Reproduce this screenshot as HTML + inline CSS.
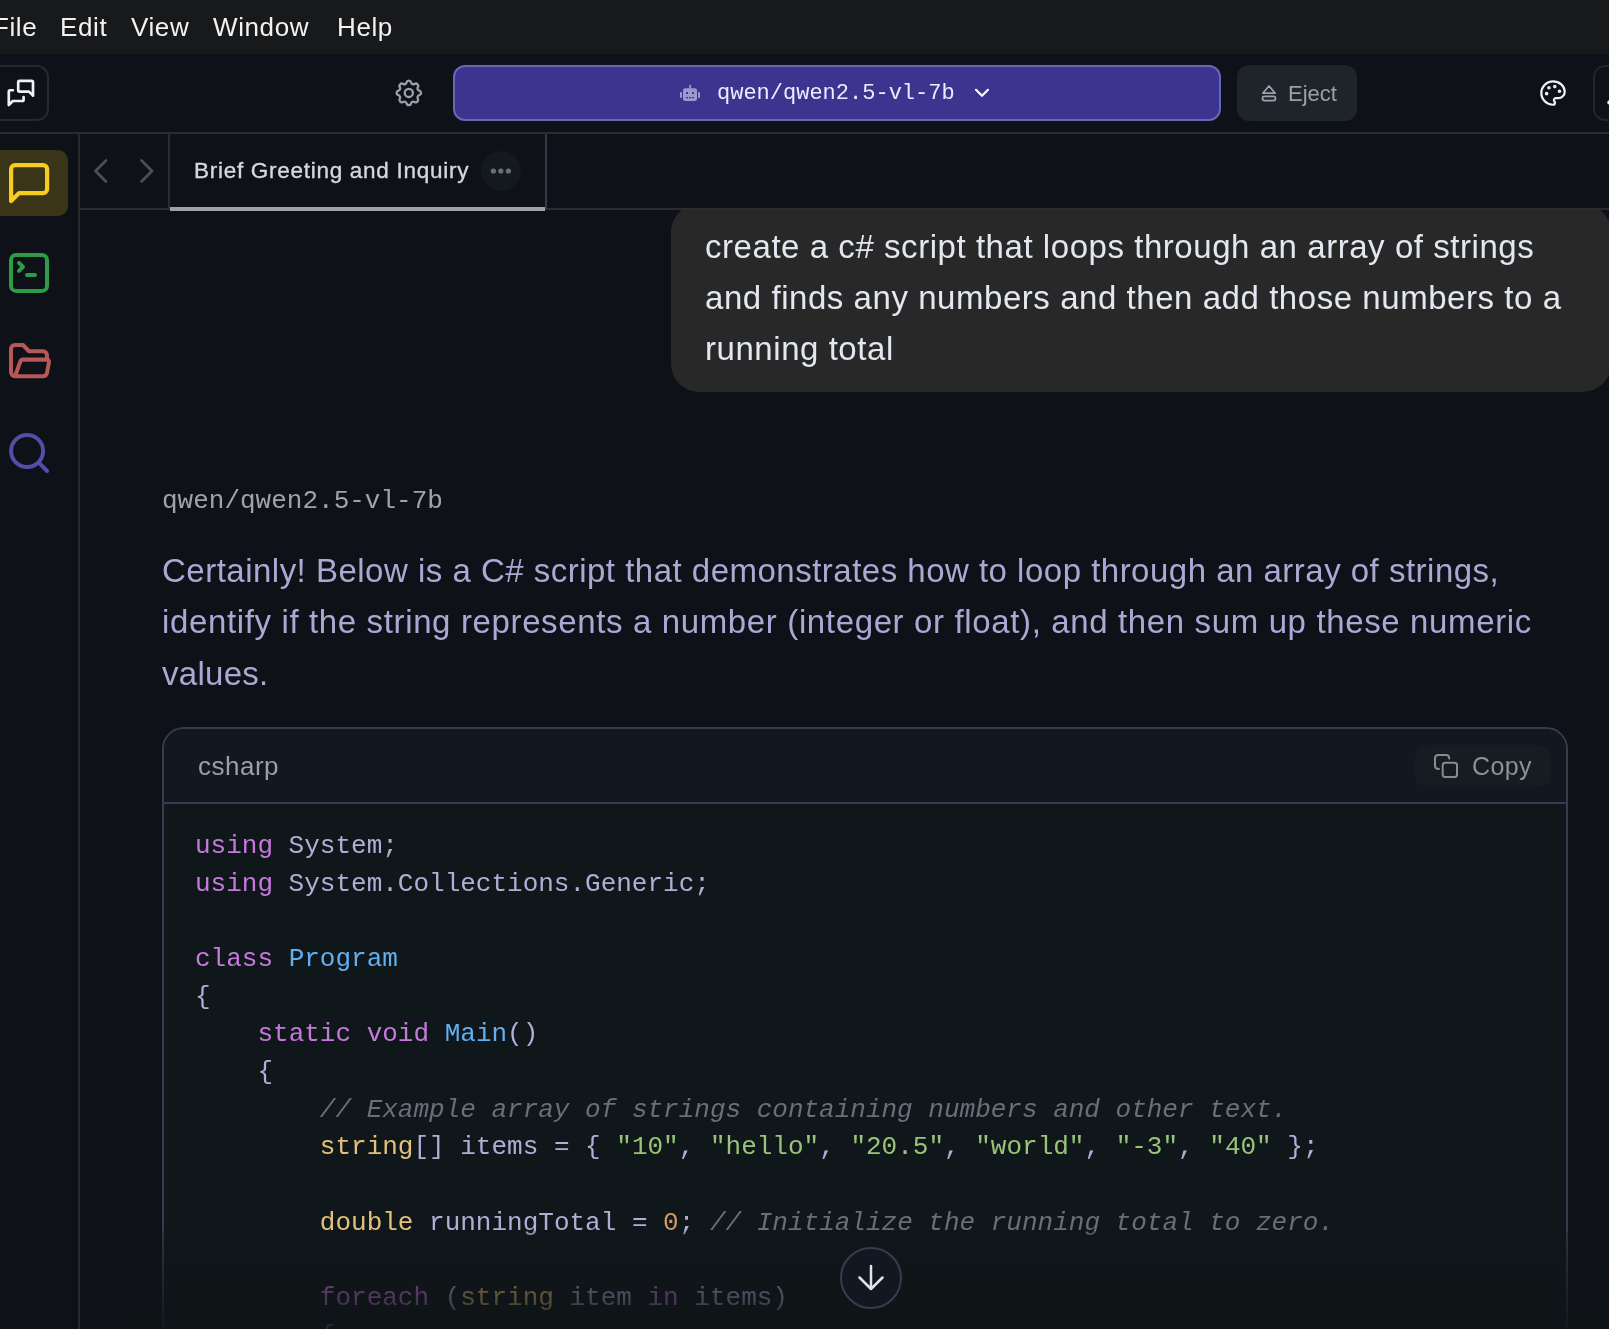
<!DOCTYPE html>
<html><head><meta charset="utf-8">
<style>
*{box-sizing:border-box;margin:0;padding:0}
html,body{width:1609px;height:1329px;overflow:hidden;background:#0e1117;font-family:"Liberation Sans",sans-serif}
.a{position:absolute}
.t{position:absolute;white-space:pre;line-height:1;will-change:transform}
pre{will-change:transform}
.mono{font-family:"Liberation Mono",monospace}
#menu{left:0;top:0;width:1609px;height:54px;background:#18191b}
#menu .t{color:#f2f2f2;font-size:26px;top:14px;letter-spacing:0.6px}
#hline1{left:0;top:132px;width:1609px;height:2px;background:#2a2c30}
#vline{left:78px;top:134px;width:2px;height:1195px;background:#28292d}
#tabline{left:80px;top:208px;width:1529px;height:2px;background:#2a2c30}
#sel{left:453px;top:65px;width:768px;height:56px;background:#3b3590;border:2px solid #6965bb;border-radius:12px}
#eject{left:1237px;top:65px;width:120px;height:56px;background:#1f232a;border-radius:12px}
#lbtn{left:-14px;top:65px;width:63px;height:56px;border:2px solid #252a31;border-radius:12px}
#rbtn{left:1593px;top:65px;width:63px;height:56px;border:2px solid #21262c;border-radius:12px}
#active{left:-10px;top:150px;width:78px;height:66px;background:#3a3418;border-radius:10px}
#tabsep1{left:168px;top:134px;width:2px;height:75px;background:#2a2c30}
#tabsep2{left:545px;top:134px;width:2px;height:75px;background:#363947}
#tabul{left:170px;top:207px;width:375px;height:4px;background:#9ca0a8}
#dots{left:481px;top:151px;width:40px;height:40px;border-radius:50%;background:#141920}
#bubclip{left:80px;top:210px;width:1529px;height:1119px;overflow:hidden}
#bubble{left:591px;top:-6px;width:940px;height:188px;background:#282828;border-radius:28px}
#bubble .t{color:#e3e8f0;font-size:33px;letter-spacing:0.55px}
#para .t{color:#aba9d4;font-size:33px;letter-spacing:0.57px}
#code{left:162px;top:727px;width:1406px;height:700px;border:2px solid #373b4d;border-radius:22px;background:#10171a;overflow:hidden}
#codehead{left:0;top:0;width:1402px;height:75px;background:#12181f;border-bottom:2px solid #373b4d}
#copy{left:1251px;top:16px;width:136px;height:42px;border-radius:12px;background:#171c23}
.code{color:#b0aed6;font-size:26px}
.kw{color:#c678dd}
.ty{color:#61afef}
.st{color:#98c379}
.nu{color:#d19a66}
.yl{color:#e5c07b}
.cm{color:#686e7a;font-style:italic}
#fade{left:119px;top:1231px;width:1490px;height:98px;background:linear-gradient(to bottom,rgba(15,20,23,0.2),rgba(15,20,23,0.88))}
#down{left:840px;top:1247px;width:62px;height:62px;border-radius:50%;border:2px solid #3a3c4e;background:#121822}
</style></head><body>
<div id="menu" class="a">
  <div class="t" style="left:-7px">File</div>
  <div class="t" style="left:60px">Edit</div>
  <div class="t" style="left:131px">View</div>
  <div class="t" style="left:213px">Window</div>
  <div class="t" style="left:337px">Help</div>
</div>
<div id="hline1" class="a"></div>
<div id="vline" class="a"></div>
<div id="tabline" class="a"></div>
<div id="lbtn" class="a"></div>
<div id="rbtn" class="a"></div>
<div id="sel" class="a"></div>
<div id="eject" class="a"></div>
<div class="t" style="left:1288px;top:83px;font-size:22px;color:#9aa0a8">Eject</div>
<div class="t mono" style="left:716.5px;top:82.5px;font-size:22px;color:#ecebff">qwen/qwen2.5-vl-7b</div>
<div id="active" class="a"></div>
<div id="tabsep1" class="a"></div>
<div id="tabsep2" class="a"></div>
<div id="tabul" class="a"></div>
<div id="dots" class="a"></div>
<div class="t" style="left:194px;top:159.5px;font-size:22.5px;letter-spacing:0.72px;-webkit-text-stroke:0.35px #d5d9df;color:#d5d9df">Brief Greeting and Inquiry</div>

<div id="bubclip" class="a">
  <div id="bubble" class="a">
    <div class="t" style="left:34px;top:26px">create a c# script that loops through an array of strings</div>
    <div class="t" style="left:34px;top:77px">and finds any numbers and then add those numbers to a</div>
    <div class="t" style="left:34px;top:128px">running total</div>
  </div>
</div>

<div class="t mono" style="left:162px;top:488px;font-size:26px;color:#a0a4aa">qwen/qwen2.5-vl-7b</div>
<div id="para">
  <div class="t" style="left:162px;top:554px;letter-spacing:0.49px">Certainly! Below is a C# script that demonstrates how to loop through an array of strings,</div>
  <div class="t" style="left:162px;top:605px;letter-spacing:0.635px">identify if the string represents a number (integer or float), and then sum up these numeric</div>
  <div class="t" style="left:162px;top:657px;letter-spacing:0.28px">values.</div>
</div>

<div id="code" class="a">
  <div id="codehead" class="a"></div>
  <div class="t" style="left:34px;top:24px;font-size:26px;letter-spacing:0.5px;color:#9aa0a6">csharp</div>
  <div id="copy" class="a"></div>
<pre class="code mono" style="position:absolute;left:31.2px;top:99px;line-height:37.67px;margin:0"><span class="kw">using</span> System;
<span class="kw">using</span> System.Collections.Generic;

<span class="kw">class</span> <span class="ty">Program</span>
{
    <span class="kw">static</span> <span class="kw">void</span> <span class="ty">Main</span>()
    {
        <span class="cm">// Example array of strings containing numbers and other text.</span>
        <span class="yl">string</span>[] items = { <span class="st">"10"</span>, <span class="st">"hello"</span>, <span class="st">"20.5"</span>, <span class="st">"world"</span>, <span class="st">"-3"</span>, <span class="st">"40"</span> };

        <span class="yl">double</span> runningTotal = <span class="nu">0</span>; <span class="cm">// Initialize the running total to zero.</span>

        <span class="kw">foreach</span> (<span class="yl">string</span> item <span class="kw">in</span> items)
        {
</pre>
  <div class="t" style="left:1307.5px;top:25px;font-size:25px;letter-spacing:0.4px;color:#8c9199">Copy</div>
</div>

<div id="fade" class="a"></div>
<div id="down" class="a"></div>
<svg class="a" style="left:0;top:0" width="1609" height="1329" viewBox="0 0 1609 1329" fill="none" stroke-linecap="round" stroke-linejoin="round">
 <!-- left toolbar messages icon -->
 <g transform="translate(4.76,76.8) scale(1.345)" stroke="#eef2f8" stroke-width="2">
  <path d="M21 14l-3 -3h-7a1 1 0 0 1 -1 -1v-6a1 1 0 0 1 1 -1h9a1 1 0 0 1 1 1v10"/>
  <path d="M14 15v2a1 1 0 0 1 -1 1h-7l-3 3v-10a1 1 0 0 1 1 -1h2"/>
 </g>
 <!-- gear -->
 <g transform="translate(392.5,76.6) scale(1.36)" stroke="#9aa1ab" stroke-width="1.7">
  <path d="M10.325 4.317c.426 -1.756 2.924 -1.756 3.35 0a1.724 1.724 0 0 0 2.573 1.066c1.543 -.94 3.31 .826 2.37 2.37a1.724 1.724 0 0 0 1.065 2.572c1.756 .426 1.756 2.924 0 3.35a1.724 1.724 0 0 0 -1.066 2.573c.94 1.543 -.826 3.31 -2.37 2.37a1.724 1.724 0 0 0 -2.572 1.065c-.426 1.756 -2.924 1.756 -3.35 0a1.724 1.724 0 0 0 -2.573 -1.066c-1.543 .94 -3.31 -.826 -2.37 -2.37a1.724 1.724 0 0 0 -1.065 -2.572c-1.756 -.426 -1.756 -2.924 0 -3.35a1.724 1.724 0 0 0 1.066 -2.573c-.94 -1.543 .826 -3.31 2.37 -2.37c1 .608 2.296 .07 2.572 -1.065z"/>
  <circle cx="12" cy="12" r="3"/>
 </g>
 <!-- robot -->
 <g fill="#9d99cc" stroke="none">
  <rect x="683" y="88.2" width="14" height="12.7" rx="2"/>
  <rect x="689.3" y="84.8" width="1.8" height="4"/>
  <rect x="680" y="92" width="2" height="6" rx="0.8"/>
  <rect x="698" y="92" width="2" height="6" rx="0.8"/>
 </g>
 <g fill="#3b3590" stroke="none">
  <rect x="686" y="92" width="2" height="2"/>
  <rect x="692" y="92" width="2" height="2"/>
  <rect x="686" y="97" width="2" height="1.3"/>
  <rect x="689" y="97" width="2" height="1.3"/>
  <rect x="692" y="97" width="2" height="1.3"/>
 </g>
 <!-- chevron down -->
 <path d="M976 89.8l6 6l6 -6" stroke="#ffffff" stroke-width="2.2"/>
 <!-- eject -->
 <g stroke="#9ca3af" stroke-width="1.7">
  <path d="M1269 86l6.2 7.2h-12.4z"/>
  <rect x="1262.5" y="96.3" width="13" height="4.3" rx="2"/>
 </g>
 <!-- palette -->
 <g transform="translate(1539,79) scale(1.17)" stroke="#eef2f8" stroke-width="1.9">
  <path d="M12 2C6.5 2 2 6.5 2 12s4.5 10 10 10c.926 0 1.648-.746 1.648-1.688 0-.437-.18-.835-.437-1.125-.29-.289-.438-.652-.438-1.125a1.640 1.640 0 0 1 1.668-1.668h1.996c3.051 0 5.555-2.503 5.555-5.554C21.965 6.012 17.461 2 12 2z"/>
  <circle cx="13.5" cy="6.5" r=".6" fill="#eef2f8"/>
  <circle cx="17.5" cy="10.5" r=".6" fill="#eef2f8"/>
  <circle cx="8.5" cy="7.5" r=".6" fill="#eef2f8"/>
  <circle cx="6.5" cy="12.5" r=".6" fill="#eef2f8"/>
 </g>
 <!-- right partial icon -->
 <circle cx="1609.5" cy="102.4" r="2.2" fill="#eef2f8" stroke="none"/>
 <!-- sidebar chat -->
 <g transform="translate(5.1,159.1) scale(2)" stroke="#f8cc1c" stroke-width="2.1">
  <path d="M21 15a2 2 0 0 1-2 2H7l-4 4V5a2 2 0 0 1 2-2h14a2 2 0 0 1 2 2z"/>
 </g>
 <!-- terminal -->
 <g transform="translate(5,248.9) scale(2)" stroke="#2d9b47" stroke-width="2">
  <rect x="3" y="3" width="18" height="18" rx="2.5"/>
  <path d="m7 11 2-2-2-2"/>
  <path d="M11 13h4"/>
 </g>
 <!-- folder open -->
 <g transform="translate(5,336.7) scale(2,2.08)" stroke="#b85757" stroke-width="2">
  <path d="M5 19l2.757 -7.351a1 1 0 0 1 .936 -.649h12.307a1 1 0 0 1 .986 1.164l-.996 5.211a2 2 0 0 1 -1.964 1.625h-14.026a2 2 0 0 1 -2 -2v-11a2 2 0 0 1 2 -2h4l3 3h7a2 2 0 0 1 2 2v2"/>
 </g>
 <!-- search -->
 <g transform="translate(5.1,429) scale(2)" stroke="#534ea8" stroke-width="2">
  <circle cx="11" cy="11" r="8"/>
  <path d="m21 21-4.3-4.3"/>
 </g>
 <!-- tab chevrons -->
 <path d="M106 160.5l-10.5 10.5l10.5 10.5" stroke="#4b4f57" stroke-width="2.8"/>
 <path d="M141.5 160.5l10.5 10.5l-10.5 10.5" stroke="#4b4f57" stroke-width="2.8"/>
 <!-- dots -->
 <g fill="#6b7078" stroke="none">
  <circle cx="493.4" cy="171" r="2.6"/>
  <circle cx="500.8" cy="171" r="2.6"/>
  <circle cx="508.4" cy="171" r="2.6"/>
 </g>
 <!-- copy icon -->
 <g stroke="#868c94" stroke-width="2">
  <rect x="1442.7" y="762.7" width="14.3" height="14.3" rx="2.5"/>
  <path d="M1439 769c-2.2 0 -4 -1.2 -4 -3.5v-7c0 -2 1.5 -3.5 3.5 -3.5h8c1.8 0 2.7 1 2.7 3.5"/>
 </g>
</svg>
<svg class="a" style="left:0;top:0" width="1609" height="1329" fill="none" stroke-linecap="round" stroke-linejoin="round">
 <path d="M871 1266v23M859.5 1277.5l11.5 11.5l11.5 -11.5" stroke="#dfe3ea" stroke-width="2.5"/>
</svg>

</body></html>
